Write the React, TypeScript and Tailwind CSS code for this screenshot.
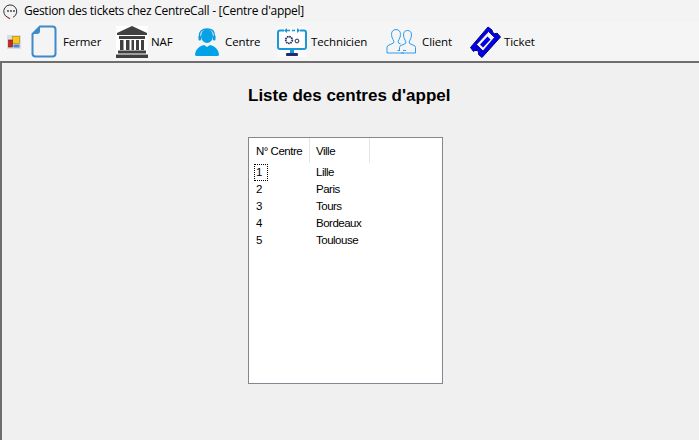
import React from "react";

function MdiIcon() {
  return (
    <svg width="14" height="14" viewBox="0 0 14 14" className="block">
      <rect x="0" y="0" width="14" height="14" fill="#dcdcdc" />
      <rect x="5.500" y="1.500" width="7" height="7" fill="#f6c81c" stroke="#b98a10" strokeWidth="0.700" />
      <rect x="1.500" y="5" width="4" height="7" fill="#c8281e" stroke="#7a1a12" strokeWidth="0.600" />
      <rect x="6.500" y="9.500" width="6" height="3" fill="#4a86d8" />
    </svg>
  );
}

function FileIcon() {
  return (
    <svg width="26" height="33" viewBox="0 0 26 33" className="block">
      <path d="M9 1.500H21.500Q24.500 1.500 24.500 4.500V28.500Q24.500 31.500 21.500 31.500H4.500Q1.500 31.500 1.500 28.500V9L9 1.500Z" fill="#f4f4f4" stroke="#3d8ac9" strokeWidth="2" strokeLinejoin="round" />
      <path d="M9 1.500V6Q9 9 6 9H1.500Z" fill="#3d8ac9" />
    </svg>
  );
}

function BankIcon() {
  return (
    <svg width="32" height="32" viewBox="0 0 32 32" className="block bg-white">
      <path d="M16 0L31 7V9H1V7Z" fill="#404040" />
      <rect x="3" y="10" width="26" height="3" fill="#404040" />
      <path d="M4 14h3.500v10H4zM10 14h3.500v10H10zM15.500 14h2.500v10h-2.500zM20 14h3v10h-3zM25 14h3v10h-3z" fill="#404040" />
      <rect x="2" y="24.500" width="28" height="3" fill="#404040" />
      <rect x="0" y="28.500" width="32" height="3.500" fill="#404040" />
    </svg>
  );
}

function AgentIcon() {
  return (
    <svg width="24" height="28" viewBox="0 0 24 28" className="block">
      <ellipse cx="12" cy="8" rx="6" ry="7" fill="#0aa0e6" />
      <path d="M4.500 10V7.500Q4.500 1 12 1Q19.500 1 19.500 7.500V10" fill="none" stroke="#0a9be0" strokeWidth="1.300" />
      <rect x="3.500" y="7.500" width="2.500" height="5" rx="1" fill="#0a9be0" />
      <rect x="18" y="7.500" width="2.500" height="5" rx="1" fill="#0a9be0" />
      <path d="M0 27Q0 24 1.500 22Q4 18 9 17L12 19L15 17Q20 18 22.500 22Q24 24 24 27Q24 28 22 28H2Q0 28 0 27Z" fill="#00a2e8" />
    </svg>
  );
}

function TechIcon() {
  return (
    <svg width="30" height="30" viewBox="0 0 30 30" className="block bg-[#fafafa]">
      <path d="M7 3.500H3Q1 3.500 1 5.500V20Q1 22 3 22H27Q29 22 29 20V5.500Q29 3.500 27 3.500H23" fill="#fff" stroke="#1b98d8" strokeWidth="2" />
      <path d="M10 3.500H20" stroke="#1b98d8" strokeWidth="1.300" strokeDasharray="3 2" />
      <path d="M10 1L7 3.500L10 6ZM20 1L23 3.500L20 6Z" fill="#1b98d8" />
      <circle cx="12" cy="13" r="3.300" fill="none" stroke="#1c2a5a" strokeWidth="1.800" strokeDasharray="1.500 0.700" />
      <circle cx="12" cy="13" r="1" fill="#fff" />
      <circle cx="20" cy="14" r="1.900" fill="none" stroke="#1c2a5a" strokeWidth="1" />
      <rect x="13" y="23" width="4" height="3" fill="#1b98d8" />
      <rect x="9" y="26" width="12" height="3" rx="1" fill="#1f2a7a" />
    </svg>
  );
}

function ClientIcon() {
  return (
    <svg width="30" height="25" viewBox="0 0 30 25" className="block">
      <g fill="none" stroke="#2a9df4" strokeWidth="1">
        <path d="M1 24V18.500Q1 16.500 3 16L7.500 14Q8.500 12.500 7 10.500Q5.500 8 5.500 5.500Q5.500 .8 10 .5Q14.500 .8 14.500 5.500Q14.500 8 13 10.500Q11.500 12.500 12.500 14L14.500 15" />
        <path d="M1 24H18" />
        <path d="M15 24H29.500V18.500Q29.500 17 28 16.500L23.500 14.500Q22.500 13 24 11Q25.500 8.500 25.500 6Q25.500 1.500 21.500 1.500Q17.500 1.500 17.500 6Q17.500 8.500 19 11Q20.500 13 19.500 14.500L15 16.500Q13.500 17 13.500 18.500V21.500" />
        <path d="M11.500 21.500H14M17 21.500H20" />
      </g>
    </svg>
  );
}

function TicketIcon() {
  return (
    <svg width="31" height="32" viewBox="0 0 31 32" className="block">
      <path d="M18 1L22 4Q22 7 24.500 7.500Q26.500 8 27 7L30.500 11L12 31.500L8.500 28.500Q9.500 25.500 7 24.500Q4.500 24 3.500 25.500L0.500 21.500Z" fill="#0000e0" stroke="#000080" strokeWidth="1" strokeLinejoin="round" />
      <path d="M18.500 5.500L24.500 11.500L13 25L6.500 18.500Z" fill="#f4f4f4" stroke="#000090" strokeWidth="0.800" />
      <path d="M17.500 10.500L20.500 13.500L13 21.500L10 18.500Z" fill="#0000e0" />
    </svg>
  );
}

const items = [
  { label: "Fermer", icon: <FileIcon />, w: "w-[85px]", gap: "gap-[6px]" },
  { label: "NAF", icon: <BankIcon />, w: "w-[79px]", gap: "gap-[3px]" },
  { label: "Centre", icon: <AgentIcon />, w: "w-[82px]", gap: "gap-[6px]" },
  { label: "Technicien", icon: <TechIcon />, w: "w-[109px]", gap: "gap-[4px]" },
  { label: "Client", icon: <ClientIcon />, w: "w-[84px]", gap: "gap-[6px]" },
  { label: "Ticket", icon: <TicketIcon />, w: "w-[80px]", gap: "gap-[3px]" },
];

const rows = [
  ["1", "Lille"],
  ["2", "Paris"],
  ["3", "Tours"],
  ["4", "Bordeaux"],
  ["5", "Toulouse"],
];

export default function App() {
  return (
    <div className="w-[699px] h-[440px] overflow-hidden flex flex-col bg-[#f0f0f0] text-black font-['Open_Sans','Liberation_Sans',sans-serif]">
      <div className="h-[22px] shrink-0 bg-[#f3f3f3] flex items-center pl-[2px] gap-[5px]">
        <svg width="17" height="17" viewBox="0 0 17 17" className="block">
          <path d="M6 14.500A6.500 6.500 0 1 1 11 14.300" fill="none" stroke="#333" strokeWidth="1" />
          <circle cx="6" cy="8" r="0.900" fill="#333" />
          <circle cx="9" cy="8" r="0.900" fill="#333" />
          <circle cx="12" cy="8" r="0.900" fill="#333" />
          <path d="M6 14.500L8 15.800" stroke="#d02020" strokeWidth="1.300" />
        </svg>
        <span className="text-[12px] leading-[16px] whitespace-nowrap tracking-[-0.27px]">Gestion des tickets chez CentreCall - [Centre d'appel]</span>
      </div>
      <div className="h-[39px] shrink-0 bg-[#f5f5f5] flex items-center pl-[7px]">
        <div className="w-[24px]">
          <MdiIcon />
        </div>
        {items.map((it) => (
          <div key={it.label} className={`flex items-center ${it.w} ${it.gap}`}>
            {it.icon}
            <span className="text-[11.5px] leading-[16px] whitespace-nowrap tracking-[-0.1px]">{it.label}</span>
          </div>
        ))}
      </div>
      <div className="flex-1 min-h-0 border-t-2 border-l-2 border-t-[#6e6e6e] border-l-[#6e6e6e] bg-[#f0f0f0] pl-[246px]">
        <h1 className="mt-[23px] text-[17px] leading-[20px] font-bold whitespace-nowrap font-['Liberation_Sans',sans-serif]">Liste des centres d'appel</h1>
        <div className="mt-[31px] w-[195px] h-[247px] border border-[#828790] bg-white font-['Liberation_Sans',sans-serif] text-[11.5px] tracking-[-0.5px]">
          <div className="flex h-[25px]">
            <div className="w-[61px] border-r border-[#e5e5e5] pl-[7px] leading-[27px]">N° Centre</div>
            <div className="w-[60px] border-r border-[#e5e5e5] pl-[6px] leading-[27px]">Ville</div>
          </div>
          <div className="pl-[5px] pt-[1px]">
            {rows.map(([n, v], i) => (
              <div key={n} className="flex h-[17px] items-center leading-[15px]">
                <span className={i === 0 ? "w-[14px] h-[17px] pl-[1px] mr-[48px] border border-dotted border-black leading-[15px]" : "w-[14px] pl-[2px] mr-[48px]"}>{n}</span>
                <span>{v}</span>
              </div>
            ))}
          </div>
        </div>
      </div>
    </div>
  );
}
